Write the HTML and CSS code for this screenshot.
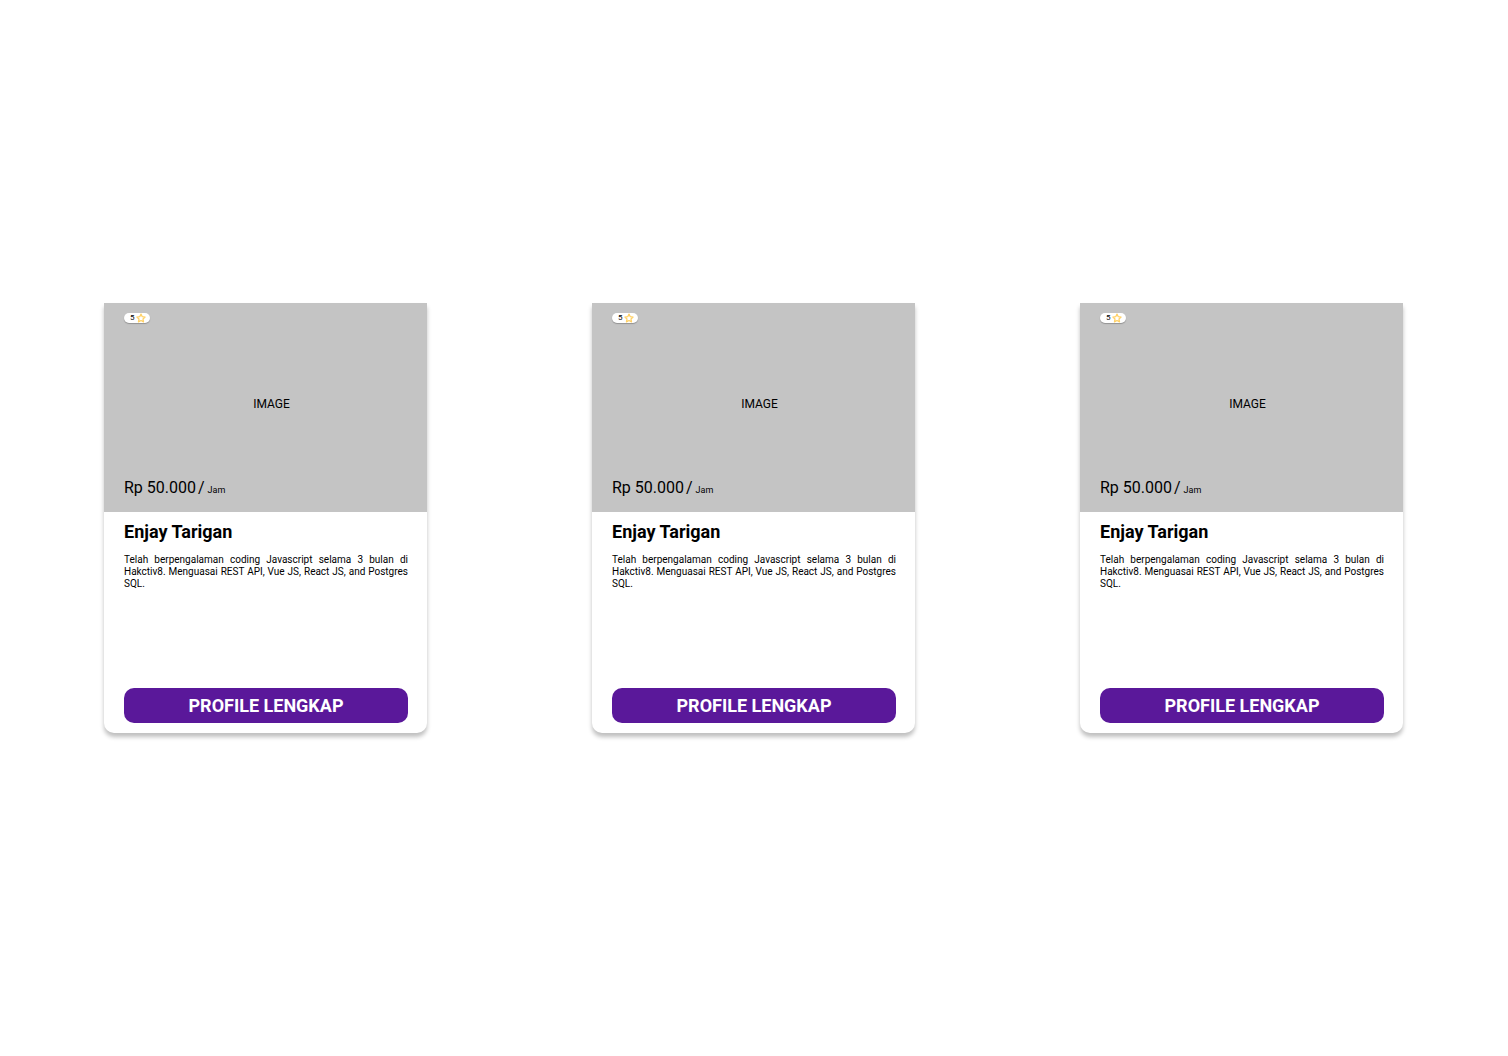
FILE: index.html
```html
<!DOCTYPE html>
<html lang="id">
<head>
<meta charset="utf-8">
<meta name="viewport" content="width=device-width, initial-scale=1">
<title>Enjay Tarigan</title>
<link rel="stylesheet" href="styles.css">
</head>
<body>
<main class="cards">
  <article class="card">
    <div class="photo">
      <span class="rating">5<svg class="star" viewBox="0 0 24 24" aria-hidden="true"><path d="M12 2.5l3 6.3 6.8.9-5 4.8 1.3 6.9-6.1-3.3-6.1 3.3 1.3-6.9-5-4.8 6.8-.9z"/></svg></span>
      <span class="placeholder">IMAGE</span>
      <p class="price">Rp 50.000 <span class="slash">/</span> <span class="unit">Jam</span></p>
    </div>
    <div class="details">
      <h2 class="name">Enjay Tarigan</h2>
      <p class="bio">Telah berpengalaman coding Javascript selama 3 bulan di Hakctiv8. Menguasai REST API, Vue JS, React JS, and Postgres SQL.</p>
      <button class="profile-button" type="button">PROFILE LENGKAP</button>
    </div>
  </article>
  <article class="card">
    <div class="photo">
      <span class="rating">5<svg class="star" viewBox="0 0 24 24" aria-hidden="true"><path d="M12 2.5l3 6.3 6.8.9-5 4.8 1.3 6.9-6.1-3.3-6.1 3.3 1.3-6.9-5-4.8 6.8-.9z"/></svg></span>
      <span class="placeholder">IMAGE</span>
      <p class="price">Rp 50.000 <span class="slash">/</span> <span class="unit">Jam</span></p>
    </div>
    <div class="details">
      <h2 class="name">Enjay Tarigan</h2>
      <p class="bio">Telah berpengalaman coding Javascript selama 3 bulan di Hakctiv8. Menguasai REST API, Vue JS, React JS, and Postgres SQL.</p>
      <button class="profile-button" type="button">PROFILE LENGKAP</button>
    </div>
  </article>
  <article class="card">
    <div class="photo">
      <span class="rating">5<svg class="star" viewBox="0 0 24 24" aria-hidden="true"><path d="M12 2.5l3 6.3 6.8.9-5 4.8 1.3 6.9-6.1-3.3-6.1 3.3 1.3-6.9-5-4.8 6.8-.9z"/></svg></span>
      <span class="placeholder">IMAGE</span>
      <p class="price">Rp 50.000 <span class="slash">/</span> <span class="unit">Jam</span></p>
    </div>
    <div class="details">
      <h2 class="name">Enjay Tarigan</h2>
      <p class="bio">Telah berpengalaman coding Javascript selama 3 bulan di Hakctiv8. Menguasai REST API, Vue JS, React JS, and Postgres SQL.</p>
      <button class="profile-button" type="button">PROFILE LENGKAP</button>
    </div>
  </article>
</main>
</body>
</html>
```
FILE: styles.css
```css
* {
  box-sizing: border-box;
}

body {
  margin: 0;
  background: #fff;
  color: #000;
  font-family: Roboto, sans-serif;
}

.cards {
  display: flex;
  flex-wrap: wrap;
  justify-content: space-between;
  align-content: center;
  gap: 40px;
  min-height: 100vh;
  padding: 20px 105px 40px 104px;
}

.card {
  display: flex;
  flex-direction: column;
  width: 323px;
  min-height: 430px;
  border-radius: 0 0 10px 10px;
  background: #fff;
  box-shadow: 0 4px 4px rgba(0, 0, 0, 0.25);
}

.photo {
  display: flex;
  flex-direction: column;
  justify-content: space-between;
  height: 209px;
  padding: 10px 20px 12px;
  background: #c4c4c4;
}

.rating {
  display: flex;
  align-items: center;
  align-self: flex-start;
  gap: 1px;
  height: 10px;
  padding: 0 4px 0 6px;
  border-radius: 5px;
  background: #fff;
  box-shadow: 0 1px 1px rgba(0, 0, 0, 0.25);
  font-size: 8px;
  line-height: 10px;
}

.star {
  width: 10px;
  height: 10px;
  fill: none;
  stroke: #ffd166;
  stroke-width: 3;
  stroke-linejoin: round;
}

.placeholder {
  align-self: center;
  padding: 6px 0 0 12px;
  font-size: 12px;
  line-height: 14px;
}

.price {
  display: flex;
  align-items: baseline;
  gap: 2px;
  margin: 0;
  font-size: 16px;
  line-height: 20px;
}

.unit {
  padding-left: 1px;
  font-size: 9px;
}

.details {
  display: flex;
  flex: 1;
  flex-direction: column;
  padding: 10px 19px 10px 20px;
}

.name {
  margin: 0 0 12px;
  font-size: 18px;
  line-height: 20px;
}

.bio {
  margin: 0 0 20px;
  font-size: 10px;
  line-height: 12px;
  text-align: justify;
}

.profile-button {
  height: 35px;
  margin-top: auto;
  padding: 0;
  border: 0;
  border-radius: 10px;
  background: #5a189a;
  color: #fff;
  font: bold 18px/20px Roboto, sans-serif;
  cursor: pointer;
}
```
